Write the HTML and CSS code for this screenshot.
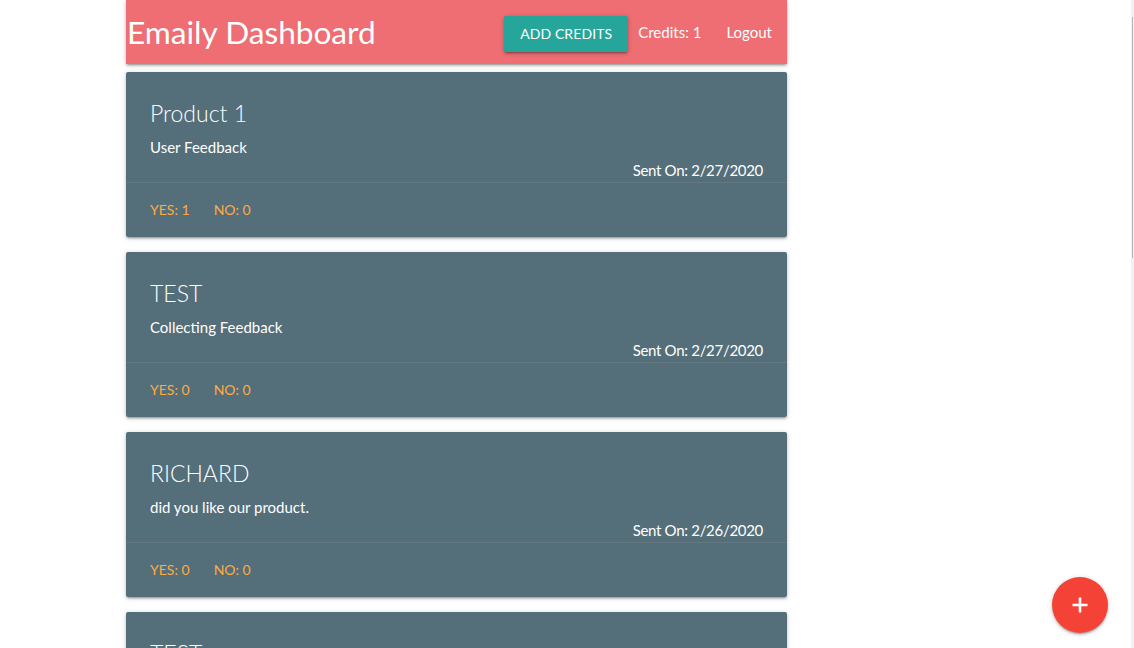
FILE: index.html
```html
<!DOCTYPE html>
<html>
<head>
<meta charset="utf-8">
<title>Emaily</title>
<link rel="stylesheet" href="styles.css">
</head>
<body>
<div class="container">
  <nav class="nav">
    <a class="brand" href="#">Emaily Dashboard</a>
    <ul class="nav-links">
      <li><a class="btn" href="#">Add Credits</a></li>
      <li class="credits">Credits: 1</li>
      <li><a class="nav-item" href="#">Logout</a></li>
    </ul>
  </nav>

  <div class="card">
    <div class="card-content">
      <span class="card-title">Product 1</span>
      <p>User Feedback</p>
      <p class="right">Sent On: 2/27/2020</p>
    </div>
    <div class="card-action">
      <a href="#">Yes: 1</a>
      <a href="#">No: 0</a>
    </div>
  </div>

  <div class="card">
    <div class="card-content">
      <span class="card-title">TEST</span>
      <p>Collecting Feedback</p>
      <p class="right">Sent On: 2/27/2020</p>
    </div>
    <div class="card-action">
      <a href="#">Yes: 0</a>
      <a href="#">No: 0</a>
    </div>
  </div>

  <div class="card">
    <div class="card-content">
      <span class="card-title">RICHARD</span>
      <p>did you like our product.</p>
      <p class="right">Sent On: 2/26/2020</p>
    </div>
    <div class="card-action">
      <a href="#">Yes: 0</a>
      <a href="#">No: 0</a>
    </div>
  </div>

  <div class="card">
    <div class="card-content">
      <span class="card-title">TEST</span>
      <p>Feedback</p>
      <p class="right">Sent On: 2/26/2020</p>
    </div>
    <div class="card-action">
      <a href="#">Yes: 0</a>
      <a href="#">No: 0</a>
    </div>
  </div>
</div>

<a class="fab" href="#" aria-label="New survey">
  <svg width="18" height="18" viewBox="0 0 18 18"><path d="M9 1.5v15M1.5 9h15" stroke="#fff" stroke-width="2.6" fill="none"/></svg>
</a>

<div class="scrollbar"><div class="scroll-thumb"></div></div>
</body>
</html>
```

FILE: styles.css
```css
html, body {
  margin: 0;
  padding: 0;
  height: 100%;
  overflow: hidden;
  background: #fff;
}
body {
  font-family: Lato, "Open Sans", sans-serif;
  font-size: 15px;
  line-height: 1.5;
  color: rgba(0,0,0,0.87);
}
a { text-decoration: none; color: inherit; }

.container {
  width: 661px;
  margin-left: 126px;
}

.nav {
  height: 64px;
  background: #ee6e73;
  color: #fff;
  display: flex;
  align-items: center;
  justify-content: space-between;
  box-shadow: 0 2px 2px 0 rgba(0,0,0,0.14), 0 3px 1px -2px rgba(0,0,0,0.12), 0 1px 5px 0 rgba(0,0,0,0.2);
}
.brand {
  font-size: 31.6px;
  line-height: 64px;
  color: #fff;
  padding-left: 1px;
}
.nav-links {
  list-style: none;
  margin: 0;
  padding: 0;
  display: flex;
  align-items: center;
  height: 64px;
}
.credits {
  margin: 0 10px;
  line-height: 64px;
  font-size: 15px;
}
.nav-item {
  display: block;
  padding: 0 15px;
  font-size: 15px;
  line-height: 64px;
  color: #fff;
}
.btn {
  display: block;
  height: 36px;
  line-height: 36px;
  padding: 0 16px;
  margin-top: 4px;
  background: #26a69a;
  color: #fff;
  font-size: 14px;
  text-transform: uppercase;
  letter-spacing: 0.1px;
  border-radius: 2px;
  box-shadow: 0 2px 2px 0 rgba(0,0,0,0.14), 0 3px 1px -2px rgba(0,0,0,0.12), 0 1px 5px 0 rgba(0,0,0,0.2);
}

.card {
  background: #546e7a;
  color: #fff;
  border-radius: 2px;
  margin: 8px 0 15px;
  box-shadow: 0 2px 2px 0 rgba(0,0,0,0.14), 0 3px 1px -2px rgba(0,0,0,0.12), 0 1px 5px 0 rgba(0,0,0,0.2);
}
.card-content {
  padding: 24px;
  height: 62px;
}
.card-title {
  display: block;
  font-size: 23px;
  font-weight: 300;
  line-height: 34px;
  margin-bottom: 6px;
}
.card-content p {
  margin: 0;
}
.card-content p.right {
  text-align: right;
  letter-spacing: -0.3px;
}
.card-action {
  border-top: 1px solid rgba(160,160,160,0.2);
  padding: 16px 24px;
  display: flex;
  gap: 24px;
  line-height: 22px;
}
.card-action a {
  color: #ffab40;
  text-transform: uppercase;
  font-size: 14px;
}

.fab {
  position: fixed;
  right: 26px;
  bottom: 15px;
  width: 56px;
  height: 56px;
  border-radius: 50%;
  background: #f44336;
  display: flex;
  align-items: center;
  justify-content: center;
  box-shadow: 0 2px 2px 0 rgba(0,0,0,0.14), 0 3px 1px -2px rgba(0,0,0,0.12), 0 1px 5px 0 rgba(0,0,0,0.2);
}

.scrollbar {
  position: fixed;
  top: 0;
  right: 0;
  width: 3px;
  height: 100%;
  background: #f1f1f1;
}
.scroll-thumb {
  margin-top: 17px;
  margin-left: 1px;
  width: 1px;
  height: 241px;
  background: #b5b5b5;
}
```
